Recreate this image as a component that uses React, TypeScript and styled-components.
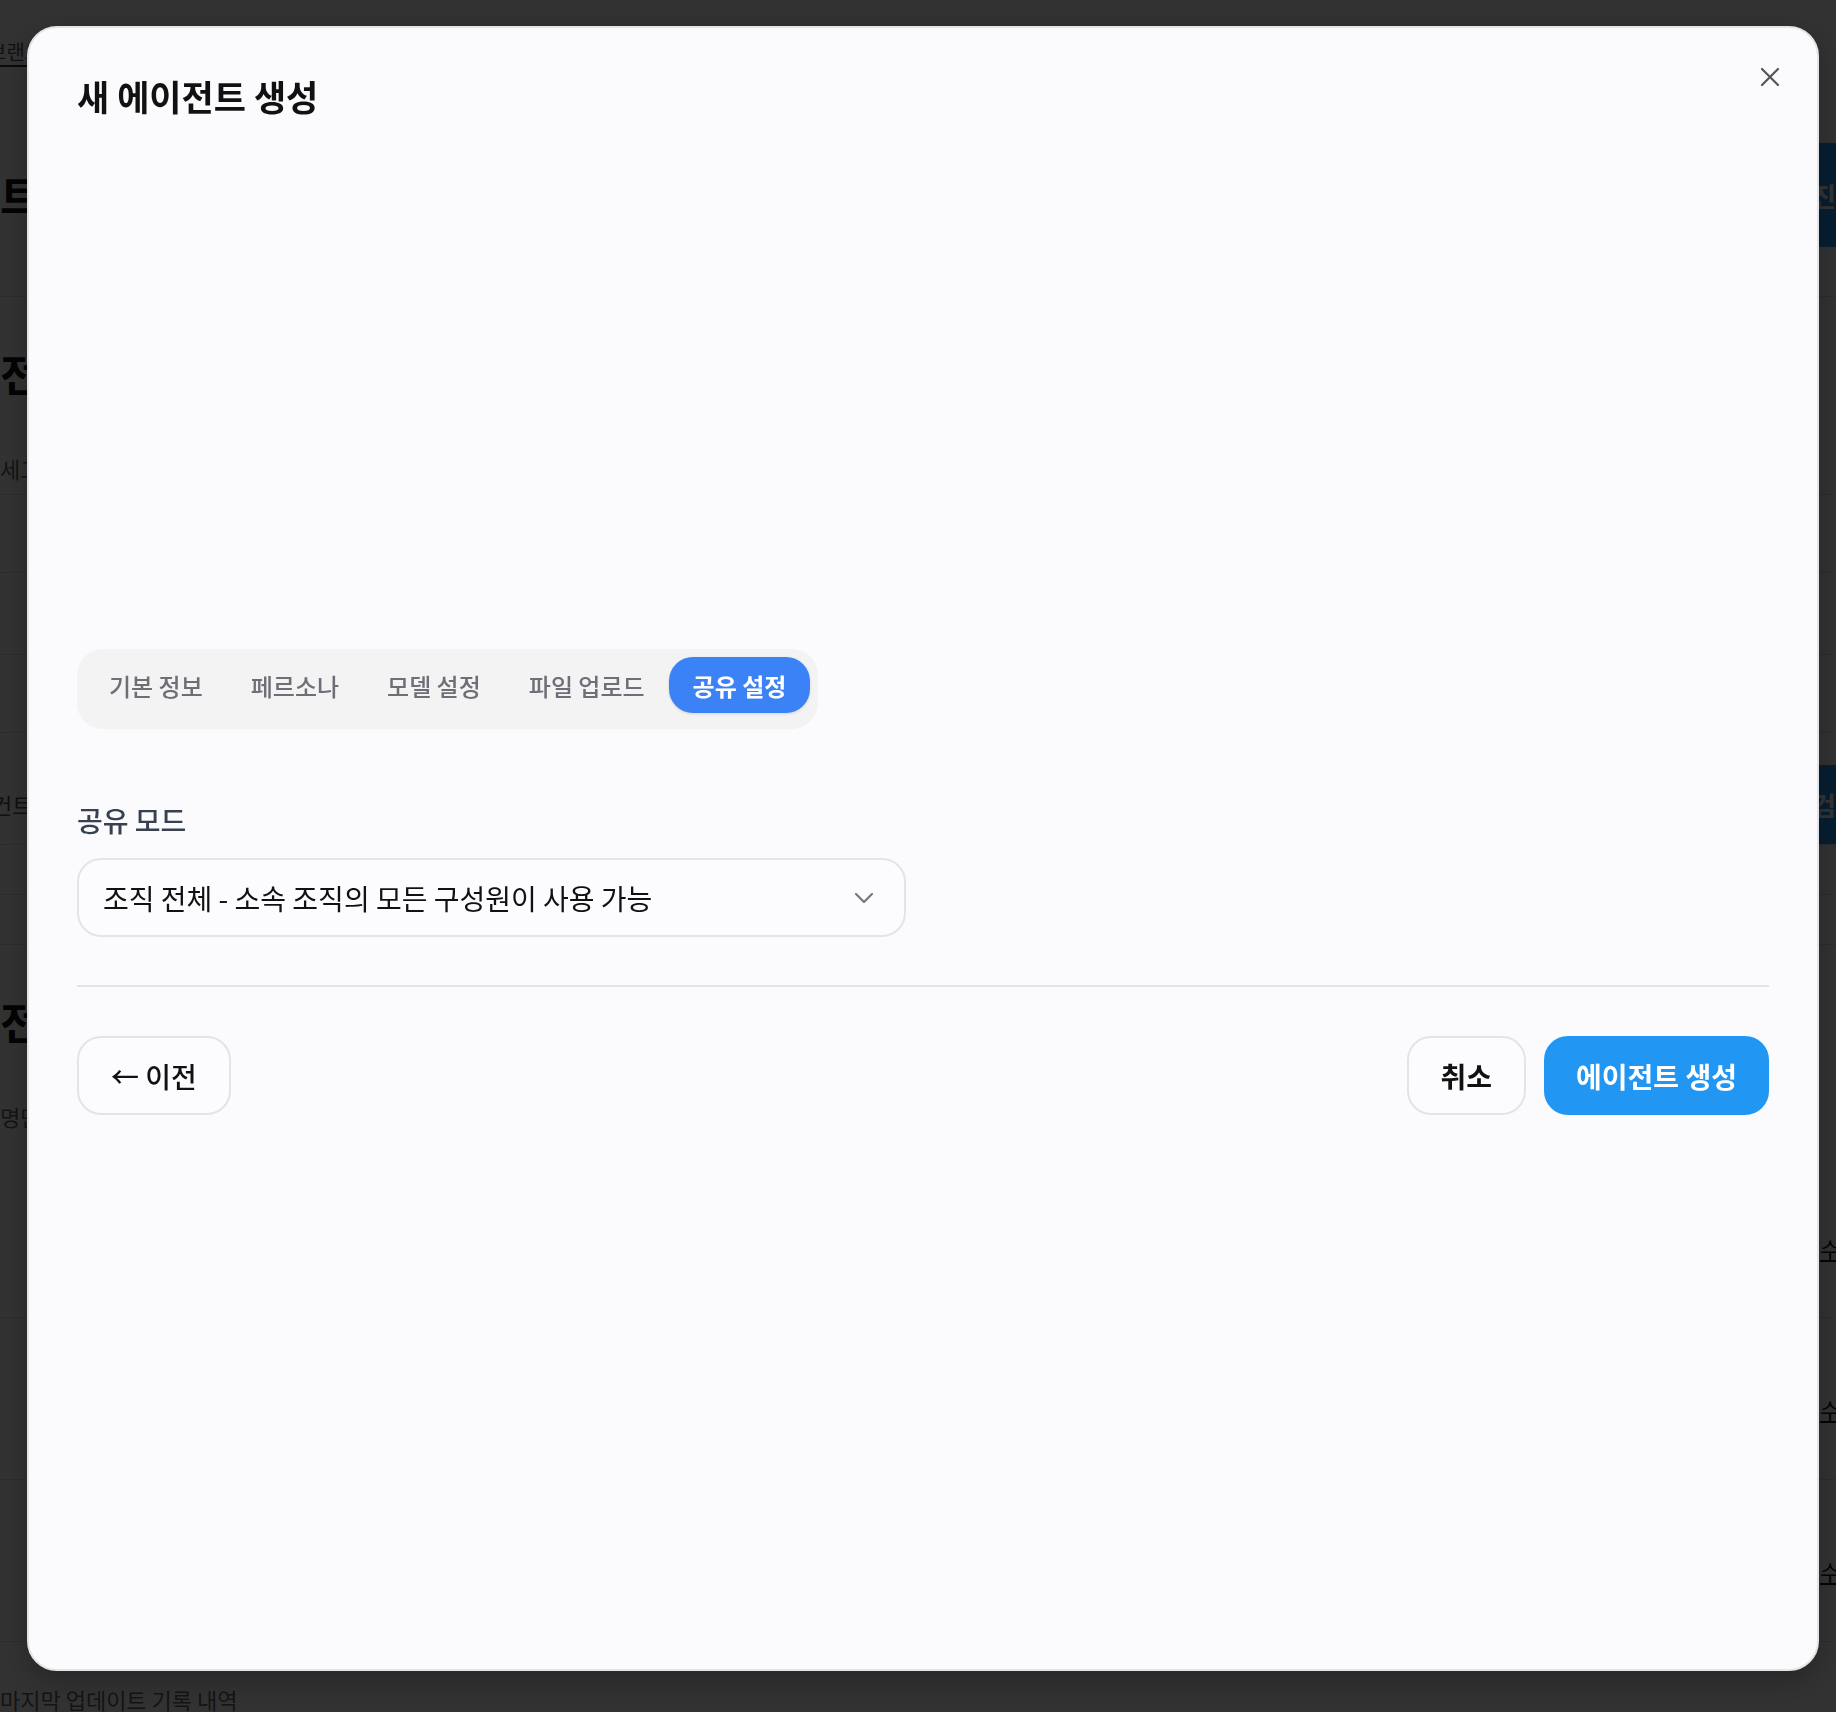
import React from 'react';
import styled, { createGlobalStyle } from 'styled-components';

const GlobalStyle = createGlobalStyle`
  html, body {
    margin: 0;
    padding: 0;
    overflow: hidden;
  }
  body {
    font-family: "Noto Sans CJK KR", "Noto Sans", sans-serif;
    background: #fafafa;
  }
  * {
    box-sizing: border-box;
  }
`;

/* ---------- page behind the dialog ---------- */

const Page = styled.div`
  width: 1910px;
  height: 1712px;
  overflow: hidden;
  background: #fafafa;
  color: #111;
  display: flex;
  flex-direction: column;
`;

const NavBar = styled.nav`
  height: 143px;
  padding-top: 40px;
  display: flex;
  gap: 32px;
`;

const NavLink = styled.span`
  font-size: 20px;
  line-height: 24px;
  height: 27px;
  color: #555;
  border-bottom: 2px solid #333;
  margin-left: -12px;
`;

const SectionHeader = styled.div`
  display: flex;
  justify-content: space-between;
  align-items: center;
  padding-bottom: 49px;
  border-bottom: 1px solid #ddd;
`;

const PageHeading = styled.h2<{ $top: number }>`
  margin: 0;
  padding-top: ${({ $top }) => $top}px;
  font-size: 44px;
  line-height: 52px;
  font-weight: 700;
`;

const HeaderButton = styled.div<{ $h: number }>`
  width: 130px;
  height: ${({ $h }) => $h}px;
  padding-left: 32px;
  display: flex;
  align-items: center;
  border-radius: 12px;
  background: #2196f3;
  color: #fff;
  font-size: 26px;
  font-weight: 600;
`;

const SubText = styled.div<{ $top: number; $h: number }>`
  height: ${({ $h }) => $h}px;
  padding-top: ${({ $top }) => $top}px;
  font-size: 22px;
  line-height: 26px;
  color: #666;
`;

const TableRow = styled.div<{ $h: number; $align?: string }>`
  height: ${({ $h }) => $h}px;
  border-bottom: 1px solid #ddd;
  display: flex;
  justify-content: space-between;
  align-items: ${({ $align }) => $align ?? 'flex-end'};
  font-size: 22px;
  color: #555;
`;

const RowCell = styled.span`
  padding-bottom: 24px;
  margin-left: -8px;
`;

const RowAction = styled.span`
  width: 90px;
  padding-top: 20px;
  color: #111;
  text-decoration: underline;
`;

/* ---------- dialog ---------- */

const Overlay = styled.div`
  position: fixed;
  inset: 0;
  padding: 26px 17px 41px 27px;
  background: rgba(0, 0, 0, 0.8);
  display: flex;
`;

const Dialog = styled.div`
  position: relative;
  flex: 1;
  display: flex;
  flex-direction: column;
  padding: 48px;
  border: 2px solid #e4e4e8;
  border-radius: 30px;
  background: #fbfbfd;
  box-shadow: 0 10px 30px rgba(0, 0, 0, 0.25);
`;

const Title = styled.h1`
  margin: 0;
  font-size: 35px;
  line-height: 40px;
  font-weight: 700;
  color: #111;
`;

const CloseButton = styled.button`
  position: absolute;
  top: 39px;
  right: 37px;
  width: 20px;
  height: 20px;
  padding: 0;
  border: none;
  background: none;
  color: #555;
  display: flex;
`;

const Body = styled.div`
  margin-top: 533px;
  display: flex;
  flex-direction: column;
  align-items: flex-start;
`;

const TabList = styled.div`
  display: inline-flex;
  padding: 8px 8px 16px 8px;
  border-radius: 26px;
  background: #f3f3f4;
`;

const Tab = styled.button<{ $active?: boolean }>`
  height: 56px;
  padding: 0 24px;
  border: none;
  border-radius: 24px;
  font-family: inherit;
  font-size: 24px;
  font-weight: ${({ $active }) => ($active ? 600 : 500)};
  color: ${({ $active }) => ($active ? '#fff' : '#6e6e76')};
  background: ${({ $active }) => ($active ? '#3b82f6' : 'transparent')};
  box-shadow: ${({ $active }) => ($active ? '0 1px 3px rgba(0,0,0,0.12)' : 'none')};
`;

const FieldLabel = styled.label`
  margin-top: 72px;
  font-size: 28px;
  line-height: 39px;
  font-weight: 500;
  color: #374151;
`;

const SelectBox = styled.div`
  margin-top: 18px;
  width: 829px;
  height: 79px;
  padding: 0 30px 0 24px;
  display: flex;
  align-items: center;
  justify-content: space-between;
  border: 2px solid #e4e4e7;
  border-radius: 24px;
  background: #fcfcfe;
  font-size: 28px;
  color: #111;
`;

const Divider = styled.hr`
  align-self: stretch;
  margin: 48px 0 0;
  border: none;
  border-top: 2px solid #e4e4e7;
`;

const Footer = styled.div`
  align-self: stretch;
  margin-top: 49px;
  display: flex;
  justify-content: space-between;
`;

const ActionGroup = styled.div`
  display: flex;
  gap: 18px;
`;

const Button = styled.button<{ $primary?: boolean; $weight?: number }>`
  height: 79px;
  padding: 0 ${({ $primary }) => ($primary ? 30 : 32)}px;
  border-radius: 24px;
  border: 2px solid ${({ $primary }) => ($primary ? '#2196f3' : '#e4e4e7')};
  background: ${({ $primary }) => ($primary ? '#2196f3' : '#fcfcfe')};
  color: ${({ $primary }) => ($primary ? '#fff' : '#111')};
  font-family: inherit;
  font-size: 28px;
  font-weight: ${({ $weight }) => $weight ?? 600};
`;

const tabs = ['기본 정보', '페르소나', '모델 설정', '파일 업로드', '공유 설정'];

const App = () => {
  return (
    <>
      <GlobalStyle />
      <Page>
        <NavBar>
          <NavLink>브랜드</NavLink>
        </NavBar>
        <SectionHeader>
          <PageHeading $top={0}>트렌드 에이전트</PageHeading>
          <HeaderButton $h={104}>진행</HeaderButton>
        </SectionHeader>
        <PageHeading $top={50}>전체 에이전트</PageHeading>
        <SubText $top={56} $h={95}>세그먼트별 에이전트 목록</SubText>
        <TableRow $h={79} style={{ borderTop: '1px solid #ddd' }} />
        <TableRow $h={82} />
        <TableRow $h={78} />
        <TableRow $h={112}>
          <RowCell>컨트롤 센터</RowCell>
          <HeaderButton $h={79}>검색</HeaderButton>
        </TableRow>
        <TableRow $h={50} />
        <TableRow $h={50} />
        <PageHeading $top={50}>전체 사용자</PageHeading>
        <SubText $top={56} $h={111}>명단</SubText>
        <TableRow $h={160} $align="center">
          <span />
          <RowAction>수정</RowAction>
        </TableRow>
        <TableRow $h={162} $align="center">
          <span />
          <RowAction>수정</RowAction>
        </TableRow>
        <TableRow $h={162} $align="center">
          <span />
          <RowAction>수정</RowAction>
        </TableRow>
        <SubText $top={44} $h={60}>마지막 업데이트 기록 내역</SubText>
      </Page>

      <Overlay>
        <Dialog role="dialog">
          <Title>새 에이전트 생성</Title>
          <CloseButton aria-label="닫기">
            <svg width="20" height="20" viewBox="0 0 20 20" fill="none" stroke="currentColor" strokeWidth="2.2" strokeLinecap="round">
              <path d="M2 2 18 18M18 2 2 18" />
            </svg>
          </CloseButton>

          <Body>
            <TabList>
              {tabs.map((t) => (
                <Tab key={t} $active={t === '공유 설정'}>
                  {t}
                </Tab>
              ))}
            </TabList>

            <FieldLabel>공유 모드</FieldLabel>
            <SelectBox>
              <span>조직 전체 - 소속 조직의 모든 구성원이 사용 가능</span>
              <svg width="20" height="12" viewBox="0 0 20 12" fill="none" stroke="#77777c" strokeWidth="2.2" strokeLinecap="round" strokeLinejoin="round">
                <path d="M2 2 10 10 18 2" />
              </svg>
            </SelectBox>

            <Divider />

            <Footer>
              <Button $weight={500}>← 이전</Button>
              <ActionGroup>
                <Button>취소</Button>
                <Button $primary>에이전트 생성</Button>
              </ActionGroup>
            </Footer>
          </Body>
        </Dialog>
      </Overlay>
    </>
  );
};

export default App;
